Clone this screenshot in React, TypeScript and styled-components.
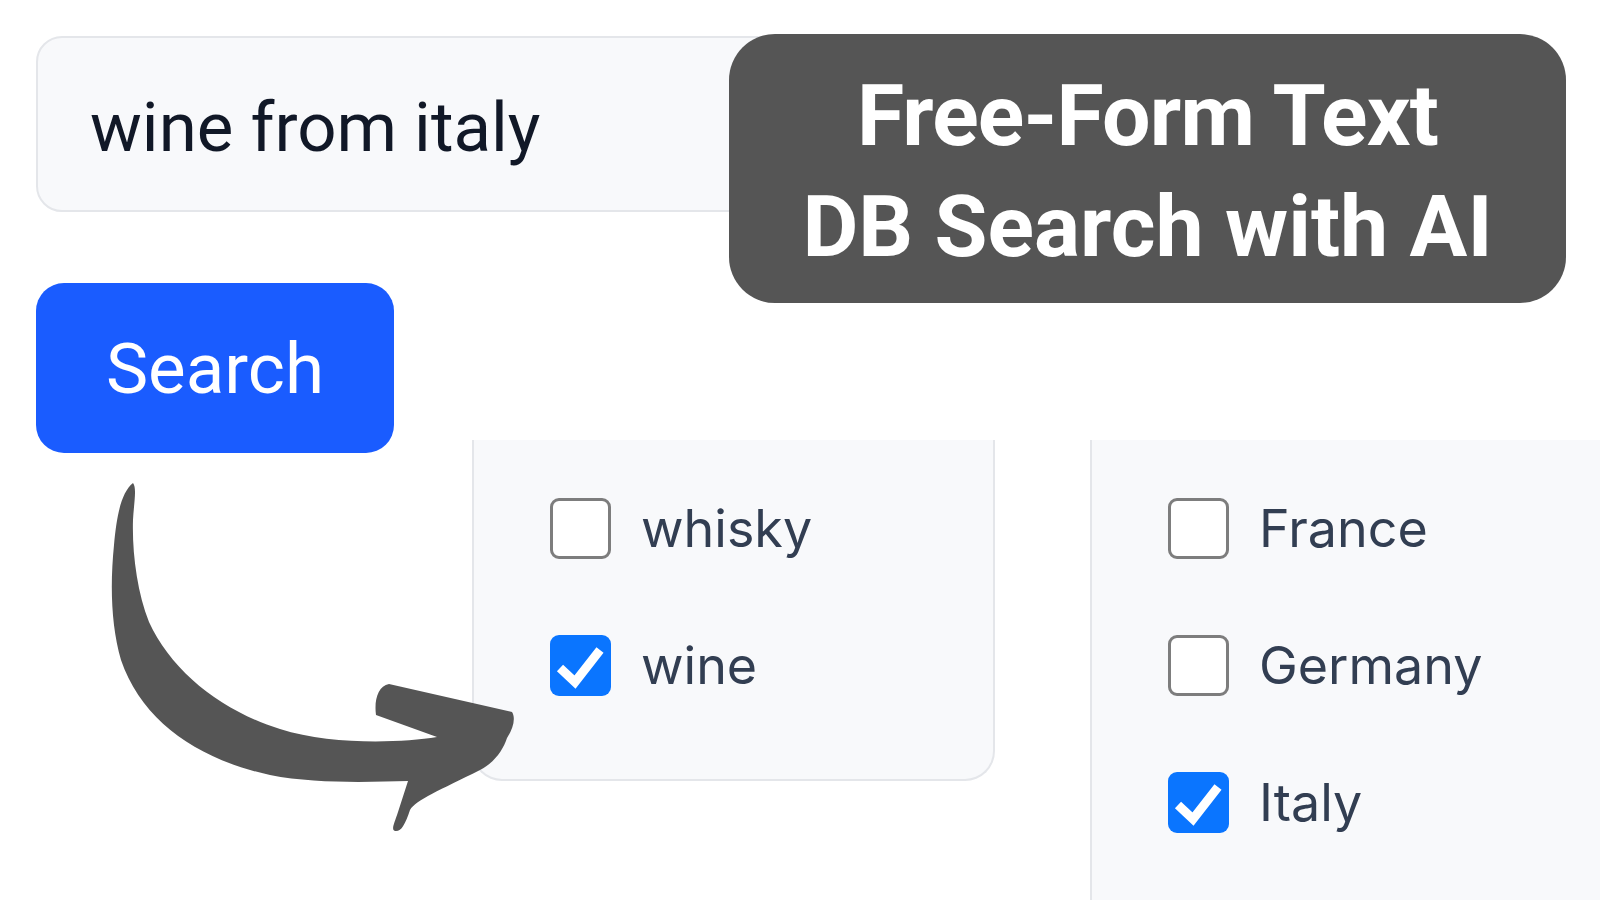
import styled, { createGlobalStyle } from "styled-components";

const GlobalStyle = createGlobalStyle`
  body {
    margin: 0;
    background: #ffffff;
  }
`;

const Page = styled.div`
  position: relative;
  width: 1600px;
  height: 900px;
  overflow: hidden;
  background: #ffffff;
`;

const TopBlock = styled.div`
  display: flex;
  flex-direction: column;
  align-items: flex-start;
  gap: 71px;
  padding: 36px 0 0 36px;
`;

const SearchInput = styled.div`
  box-sizing: border-box;
  width: 780px;
  height: 176px;
  display: flex;
  align-items: center;
  padding: 6px 0 0 52px;
  background: #f8f9fb;
  border: 2px solid #e4e6ea;
  border-radius: 26px;
  font-family: Roboto, "Liberation Sans", sans-serif;
  font-size: 69px;
  color: #111827;
`;

const SearchButton = styled.button`
  box-sizing: border-box;
  width: 358px;
  height: 170px;
  border: none;
  border-radius: 28px;
  background: #1a5cff;
  color: #ffffff;
  font-family: Roboto, "Liberation Sans", sans-serif;
  font-size: 71px;
  padding: 0;
`;

const Lower = styled.div`
  display: flex;
  gap: 95px;
  margin-top: -13px;
  padding-left: 472px;
`;

const Panel = styled.div<{ $open?: boolean }>`
  box-sizing: border-box;
  display: flex;
  flex-direction: column;
  gap: 77px;
  padding: 58px 0 0 76px;
  background: #f8f9fb;
  border: 2px solid #e4e6ea;
  border-top: none;
  ${(p) =>
    p.$open
      ? `
    flex: 1;
    height: 460px;
    border-right: none;
    border-bottom: none;
  `
      : `
    width: 523px;
    height: 341px;
    border-radius: 0 0 30px 30px;
  `}
`;

const Row = styled.label`
  display: flex;
  align-items: center;
  gap: 30px;
  height: 60px;
  font-family: Inter, "Noto Sans", sans-serif;
  font-size: 52px;
  color: #323e52;
`;

const Box = styled.span<{ $checked?: boolean }>`
  box-sizing: border-box;
  flex: none;
  width: 61px;
  height: 61px;
  border-radius: 9px;
  display: flex;
  align-items: center;
  justify-content: center;
  background: ${(p) => (p.$checked ? "#0a75ff" : "#ffffff")};
  border: ${(p) => (p.$checked ? "none" : "3px solid #7d7d7d")};
`;

const TitleCard = styled.div`
  position: absolute;
  top: 34px;
  left: 729px;
  width: 837px;
  height: 269px;
  box-sizing: border-box;
  padding-top: 4px;
  display: flex;
  flex-direction: column;
  align-items: center;
  justify-content: center;
  background: #555555;
  border-radius: 46px;
  color: #ffffff;
  font-family: Roboto, "Liberation Sans", sans-serif;
  font-weight: 700;
  font-size: 86px;
  line-height: 111px;
`;

const TitleLine = styled.div<{ $tight?: boolean }>`
  letter-spacing: ${(p) => (p.$tight ? "-0.8px" : "0")};
`;

const ArrowLayer = styled.svg`
  position: absolute;
  inset: 0;
  pointer-events: none;
`;

const Check = ({ checked }: { checked?: boolean }) => (
  <Box $checked={checked}>
    {checked && (
      <svg width="61" height="61" viewBox="0 0 61 61">
        <path
          d="M10 33 L25 47 L50 15"
          fill="none"
          stroke="#ffffff"
          strokeWidth="9"
          strokeLinejoin="miter"
        />
      </svg>
    )}
  </Box>
);

const Option = ({ label, checked }: { label: string; checked?: boolean }) => (
  <Row>
    <Check checked={checked} />
    {label}
  </Row>
);

const App = () => {
  return (
    <Page>
      <GlobalStyle />
      <TopBlock>
        <SearchInput>wine from italy</SearchInput>
        <SearchButton>Search</SearchButton>
      </TopBlock>
      <Lower>
        <Panel>
          <Option label="whisky" />
          <Option label="wine" checked />
        </Panel>
        <Panel $open>
          <Option label="France" />
          <Option label="Germany" />
          <Option label="Italy" checked />
        </Panel>
      </Lower>
      <TitleCard>
        <TitleLine $tight>Free-Form Text</TitleLine>
        <TitleLine>DB Search with AI</TitleLine>
      </TitleCard>
      <ArrowLayer width="1600" height="900" viewBox="0 0 1600 900">
        <path
          fill="#555555"
          d="M133 483
             C122 492, 117 512, 114 545
             C110 585, 111 625, 121 660
             C142 722, 200 760, 270 775
             C315 784, 370 782, 408 781
             L398 812
             C394 824, 391 830, 395 831
             C401 832, 405 825, 410 810
             C416 800, 440 790, 480 770
             C495 762, 503 750, 507 738
             C513 729, 516 718, 512 712
             L389 684
             C378 686, 374 700, 376 715
             L437 737
             C400 743, 330 745, 280 729
             C222 711, 172 672, 149 622
             C137 592, 132 552, 133 520
             C134 502, 137 488, 133 483 Z"
        />
      </ArrowLayer>
    </Page>
  );
};

export default App;
